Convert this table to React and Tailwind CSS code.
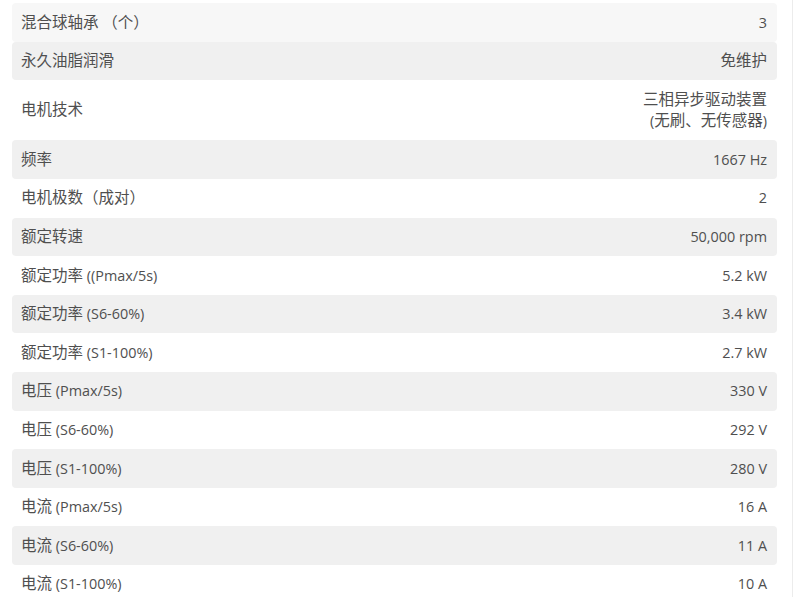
import React from "react";

const rows = [
  ["混合球轴承 （个）", ["3"]],
  ["永久油脂润滑", ["免维护"]],
  ["电机技术", ["三相异步驱动装置", "(无刷、无传感器)"]],
  ["频率", ["1667 Hz"]],
  ["电机极数（成对）", ["2"]],
  ["额定转速", ["50,000 rpm"]],
  ["额定功率 ((Pmax/5s)", ["5.2 kW"]],
  ["额定功率 (S6-60%)", ["3.4 kW"]],
  ["额定功率 (S1-100%)", ["2.7 kW"]],
  ["电压 (Pmax/5s)", ["330 V"]],
  ["电压 (S6-60%)", ["292 V"]],
  ["电压 (S1-100%)", ["280 V"]],
  ["电流 (Pmax/5s)", ["16 A"]],
  ["电流 (S6-60%)", ["11 A"]],
  ["电流 (S1-100%)", ["10 A"]],
];

const CJK = /([\u3000-\u303f\u4e00-\u9fff\uff00-\uffef]+)/;

function Mixed({ text }) {
  const parts = text.split(CJK).filter((p) => p !== "");
  return (
    <>
      {parts.map((p, i) =>
        CJK.test(p) ? (
          <span key={i} className="text-[15.5px]">
            {p}
          </span>
        ) : (
          <span key={i} className="text-[14.4px]">
            {p}
          </span>
        )
      )}
    </>
  );
}

export default function App() {
  return (
    <div
      className="w-[800px] h-[597px] overflow-hidden bg-white flex text-[15px] leading-[21.6px] text-[#4f4f4f]"
      style={{ fontFamily: '"Open Sans", "Noto Sans CJK SC", sans-serif' }}
    >
      <div className="w-[765px] ml-[12px] pt-[3px] flex flex-col shrink-0">
        {rows.map(([label, vals], i) => {
          const bg =
            i === 0
              ? "bg-[#f7f7f7]"
              : i % 2 === 1
              ? "bg-[#f0f0f0]"
              : "bg-transparent";
          return (
            <div
              key={i}
              className={`flex justify-between items-center rounded-[4px] pl-[9px] pr-[10px] py-[8.5px] shrink-0 ${bg}`}
            >
              <div className="h-[21.6px] leading-[21.6px] whitespace-nowrap">
                <Mixed text={label} />
              </div>
              <div className="text-right">
                {vals.map((v, j) => (
                  <div key={j} className="h-[21.6px] leading-[21.6px] whitespace-nowrap">
                    <Mixed text={v} />
                  </div>
                ))}
              </div>
            </div>
          );
        })}
      </div>
      <div className="w-[15px] shrink-0" />
      <div className="w-px h-full bg-[#ececec] shrink-0" />
    </div>
  );
}
